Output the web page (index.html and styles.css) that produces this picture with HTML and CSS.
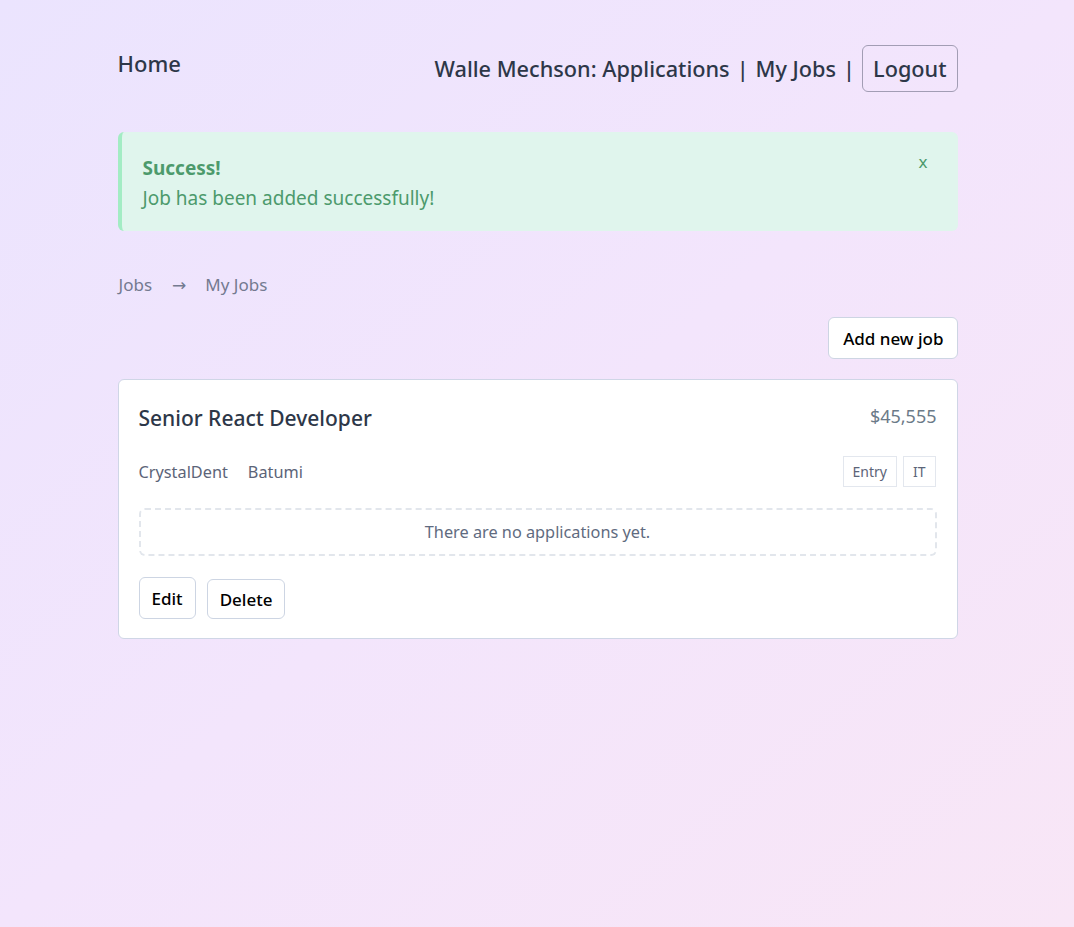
FILE: index.html
```html
<!DOCTYPE html>
<html lang="en">
<head>
<meta charset="utf-8">
<title>My Jobs</title>
<link rel="stylesheet" href="styles.css">
</head>
<body>
<div class="page">
  <nav class="nav">
    <a class="nav-home" href="#">Home</a>
    <div class="nav-right">
      <a href="#">Walle Mechson: Applications</a>
      <span class="sep">|</span>
      <a href="#">My Jobs</a>
      <span class="sep">|</span>
      <button class="logout">Logout</button>
    </div>
  </nav>

  <div class="alert">
    <div class="alert-body">
      <div class="alert-title">Success!</div>
      <div class="alert-text">Job has been added successfully!</div>
    </div>
    <span class="alert-close">x</span>
  </div>

  <div class="crumbs">
    <span>Jobs</span>
    <span class="arrow">→</span>
    <span>My Jobs</span>
  </div>

  <div class="toolbar">
    <button class="btn btn-add">Add new job</button>
  </div>

  <div class="card">
    <div class="card-head">
      <h2 class="card-title">Senior React Developer</h2>
      <span class="salary">$45,555</span>
    </div>
    <div class="card-meta">
      <div class="meta-left">
        <span>CrystalDent</span>
        <span>Batumi</span>
      </div>
      <div class="tags">
        <span class="tag">Entry</span>
        <span class="tag">IT</span>
      </div>
    </div>
    <div class="empty">There are no applications yet.</div>
    <div class="actions">
      <button class="btn btn-edit">Edit</button>
      <button class="btn btn-delete">Delete</button>
    </div>
  </div>
</div>
</body>
</html>
```

FILE: styles.css
```css
html, body {
  margin: 0;
  padding: 0;
}
body {
  min-height: 927px;
  background: linear-gradient(to bottom right, #ebe4fe 0%, #f3e5fc 50%, #f8e6f6 100%);
  font-family: "Noto Sans", "Open Sans", sans-serif;
  color: #2d3748;
  padding-left: 1px;
}
.page {
  width: 840px;
  margin: 0 auto;
  padding-top: 45px;
}
.nav {
  display: flex;
  justify-content: space-between;
  align-items: flex-start;
}
.nav a {
  color: #2d3748;
  text-decoration: none;
}
.nav-home {
  font-size: 22px;
  font-weight: 500;
  line-height: 36px;
}
.nav-right {
  display: flex;
  align-items: center;
  gap: 7px;
  font-size: 21.7px;
  font-weight: 500;
}
.nav-right .sep {
  color: #2d3748;
}
.logout {
  font: inherit;
  color: #2d3748;
  background: transparent;
  border: 1px solid #a29db4;
  border-radius: 6px;
  height: 47px;
  padding: 0 10px;
}
.alert {
  margin-top: 40px;
  display: flex;
  justify-content: space-between;
  background: #e0f5ed;
  border-left: 4px solid #a3ecc4;
  border-radius: 6px;
  padding: 21px 30px 19px 21px;
  height: 59px;
  color: #4c9a6c;
}
.alert-title {
  font-weight: 700;
  font-size: 19px;
  line-height: 30px;
}
.alert-text {
  font-size: 19px;
  line-height: 30px;
}
.alert-close {
  font-size: 17px;
  line-height: 1;
  color: #4c9a6c;
}
.crumbs {
  margin-top: 42px;
  display: flex;
  align-items: center;
  font-size: 17px;
  color: #747a90;
  line-height: 24px;
  padding-left: 1px;
}
.arrow {
  font-family: "DejaVu Sans", sans-serif;
  font-size: 17px;
  margin: 0 19px 0 20px;
}
.toolbar {
  display: flex;
  justify-content: flex-end;
  margin-top: 20px;
}
.btn {
  font-family: inherit;
  font-size: 17px;
  font-weight: 500;
  color: #000;
  background: #fff;
  border: 1px solid #cdd5e3;
  border-radius: 6px;
  height: 41px;
  padding: 0 13px;
}
.btn-add {
  height: 42px;
  padding: 0 13px 0 14px;
}
.card {
  margin-top: 20px;
  background: #fff;
  border: 1px solid #cfd6e6;
  border-radius: 6px;
  padding: 20px 20px 19px;
}
.card-head {
  display: flex;
  justify-content: space-between;
  align-items: flex-start;
}
.card-title {
  margin: 0;
  font-size: 21px;
  font-weight: 500;
  line-height: 37px;
  color: #2d3748;
}
.salary {
  font-size: 18px;
  color: #6b7a88;
  line-height: 32px;
}
.card-meta {
  margin-top: 19px;
  display: flex;
  justify-content: space-between;
  align-items: center;
}
.meta-left {
  display: flex;
  gap: 20px;
  font-size: 16.3px;
  color: #5c6478;
}
.tags {
  display: flex;
  gap: 6px;
  margin-right: 1px;
}
.tag {
  border: 1px solid #e3e7ee;
  font-size: 14px;
  color: #5c6478;
  padding: 0 9px;
  line-height: 29px;
}
.empty {
  margin-top: 21px;
  border: 2px dashed #e2e6ec;
  border-radius: 6px;
  text-align: center;
  font-size: 16.3px;
  color: #5f6b80;
  line-height: 44px;
}
.actions {
  margin-top: 21px;
  display: flex;
  align-items: flex-end;
  gap: 11px;
}
.btn-edit {
  height: 42px;
  padding: 0 12px;
}
.btn-delete {
  height: 40px;
  padding: 0 12px;
}
```
